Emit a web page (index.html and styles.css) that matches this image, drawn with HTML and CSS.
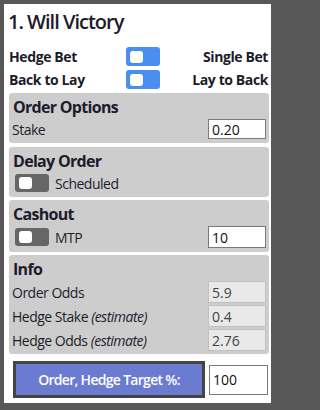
FILE: index.html
```html
<!DOCTYPE html>
<html>
<head>
<meta charset="utf-8">
<link rel="stylesheet" href="styles.css">
</head>
<body>
<div class="panel">
  <h1 class="title">1. Will Victory</h1>
  <div class="switch-row first">
    <span class="opt">Hedge Bet</span>
    <span class="toggle on"><span class="knob"></span></span>
    <span class="opt right">Single Bet</span>
  </div>
  <div class="switch-row">
    <span class="opt">Back to Lay</span>
    <span class="toggle on"><span class="knob"></span></span>
    <span class="opt right">Lay to Back</span>
  </div>

  <section class="box first-box">
    <h2 class="box-title">Order Options</h2>
    <div class="field">
      <span class="label">Stake</span>
      <input class="inp" type="text" value="0.20">
    </div>
  </section>

  <section class="box gap4">
    <h2 class="box-title">Delay Order</h2>
    <div class="field start">
      <span class="toggle off"><span class="knob"></span></span>
      <span class="label">Scheduled</span>
    </div>
  </section>

  <section class="box">
    <h2 class="box-title">Cashout</h2>
    <div class="field tall">
      <span class="toggle off"><span class="knob"></span></span>
      <span class="label grow">MTP</span>
      <input class="inp mid" type="text" value="10">
    </div>
  </section>

  <section class="box info">
    <h2 class="box-title">Info</h2>
    <div class="field">
      <span class="label">Order Odds</span>
      <input class="inp ro" type="text" value="5.9" disabled>
    </div>
    <div class="field">
      <span class="label">Hedge Stake <em>(estimate)</em></span>
      <input class="inp ro" type="text" value="0.4" disabled>
    </div>
    <div class="field">
      <span class="label">Hedge Odds <em>(estimate)</em></span>
      <input class="inp ro" type="text" value="2.76" disabled>
    </div>
  </section>

  <div class="action">
    <button class="btn">Order, Hedge Target %:</button>
    <input class="inp big" type="text" value="100">
  </div>
</div>
</body>
</html>
```

FILE: styles.css
```css
html, body {
  margin: 0;
  padding: 0;
  background: #585858;
}
body {
  padding: 4px;
  font-family: "Open Sans", "DejaVu Sans", sans-serif;
  color: #1d1c2b;
}
.panel {
  width: 261px;
  height: 399px;
  background: #fff;
  padding: 0 2px 0 4px;
  display: flex;
  flex-direction: column;
}
.title {
  margin: 0;
  padding: 5.5px 0 0 0;
  font-size: 20px;
  font-weight: 600;
  line-height: 24px;
  letter-spacing: -1px;
}
.switch-row {
  display: grid;
  grid-template-columns: 117px 34px 1fr;
  align-items: center;
  height: 23px;
  padding: 0 1px 0 1px;
}
.switch-row.first { margin-top: 11.5px; }
.opt {
  font-weight: 700;
  font-size: 14px;
  letter-spacing: -0.4px;
}
.opt.right { text-align: right; }
.toggle {
  display: flex;
  align-items: center;
  flex: none;
  width: 34px;
  height: 19px;
  border-radius: 3px;
  box-sizing: border-box;
  padding-left: 4px;
}
.toggle.on { background: #4a8ef0; }
.toggle.off {
  background: #666;
  height: 18px;
  margin-left: 3px;
}
.knob {
  width: 13px;
  height: 12px;
  border-radius: 3px;
  background: #fff;
}
.box {
  background: #cdcdcd;
  border-radius: 3px;
  margin: 3px 0 0 1px;
  padding: 4px 3px 2px 3px;
}
.box.first-box { margin-top: 2px; }
.box.gap4 { margin-top: 4px; }
.box-title {
  margin: 0 0 0 1px;
  font-size: 16px;
  font-weight: 700;
  line-height: 20px;
  letter-spacing: -0.7px;
}
.info .box-title { margin-bottom: 1px; }
.field {
  display: flex;
  align-items: center;
  justify-content: space-between;
  gap: 6px;
  height: 24px;
}
.field.tall { height: 26px; }
.field.start { justify-content: flex-start; }
.label {
  font-size: 14px;
  letter-spacing: -0.5px;
}
.label em { font-style: italic; }
.grow { flex: 1; }
.inp {
  width: 58px;
  height: 20px;
  box-sizing: border-box;
  border: 1px solid #7a7a7a;
  background: #fff;
  font-family: inherit;
  font-size: 14px;
  color: #111;
  padding: 0 3px;
  margin: 0;
  flex: none;
}
.inp.mid { height: 22px; }
.inp.ro {
  height: 22px;
  background: #e9e9e9;
  border-color: #c0c0c0;
  color: #444;
}
.action {
  display: flex;
  align-items: center;
  gap: 4px;
  margin: 7px 0 0 5px;
}
.btn {
  width: 192px;
  height: 37px;
  flex: none;
  background: #6b7bcf;
  border: 3px solid #444;
  color: #fff;
  font-family: inherit;
  font-size: 14px;
  font-weight: 600;
  letter-spacing: -0.7px;
  padding: 0;
}
.inp.big {
  width: 59px;
  height: 30px;
  font-size: 14px;
}
```
